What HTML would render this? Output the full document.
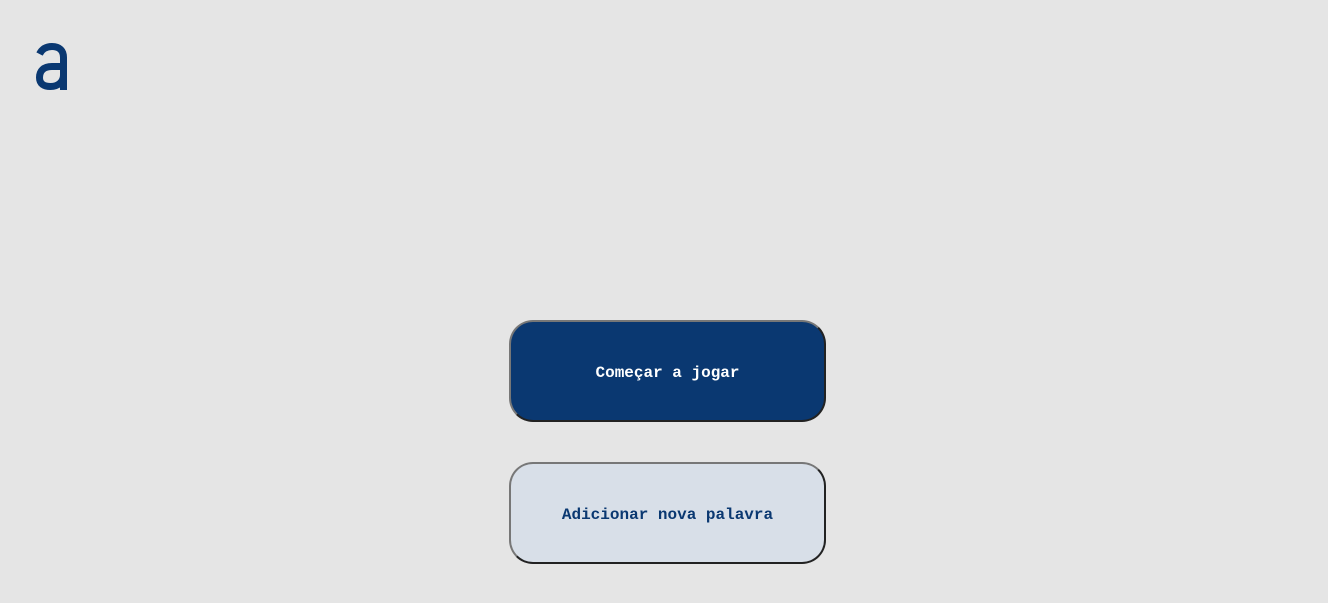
<!DOCTYPE html>
<html><head><meta charset="utf-8"><style>
html,body{margin:0;padding:0;width:1328px;height:603px;background:#e5e5e5;overflow:hidden;position:relative;font-family:"Liberation Mono",monospace;}
.btn{position:absolute;left:509px;width:317px;height:102px;box-sizing:border-box;padding-top:4px;border:2px solid;border-color:#777 #222 #222 #777;border-radius:24px;display:flex;align-items:center;justify-content:center;font-size:16px;font-weight:bold;}
.b1{top:320px;background:#0a3871;color:#fff;}
.b2{top:462px;background:#d8dfe8;color:#0a3871;}
</style></head><body>
<svg style="position:absolute;left:0;top:0" width="100" height="100" viewBox="0 0 100 100">
<path d="M39.5,54 C42,49 46,46.5 52,46.5 C59.5,46.5 63.5,50.5 63.5,57.5 L63.5,90 M63.5,66.5 L52,66.5 C43.5,66.5 39.5,71 39.5,77.5 C39.5,84 44,86.5 50.5,86.5 C58,86.5 63.5,82 63.5,75" fill="none" stroke="#0a3871" stroke-width="7"/>
</svg>
<div class="btn b1">Começar a jogar</div>
<div class="btn b2">Adicionar nova palavra</div>
</body></html>
